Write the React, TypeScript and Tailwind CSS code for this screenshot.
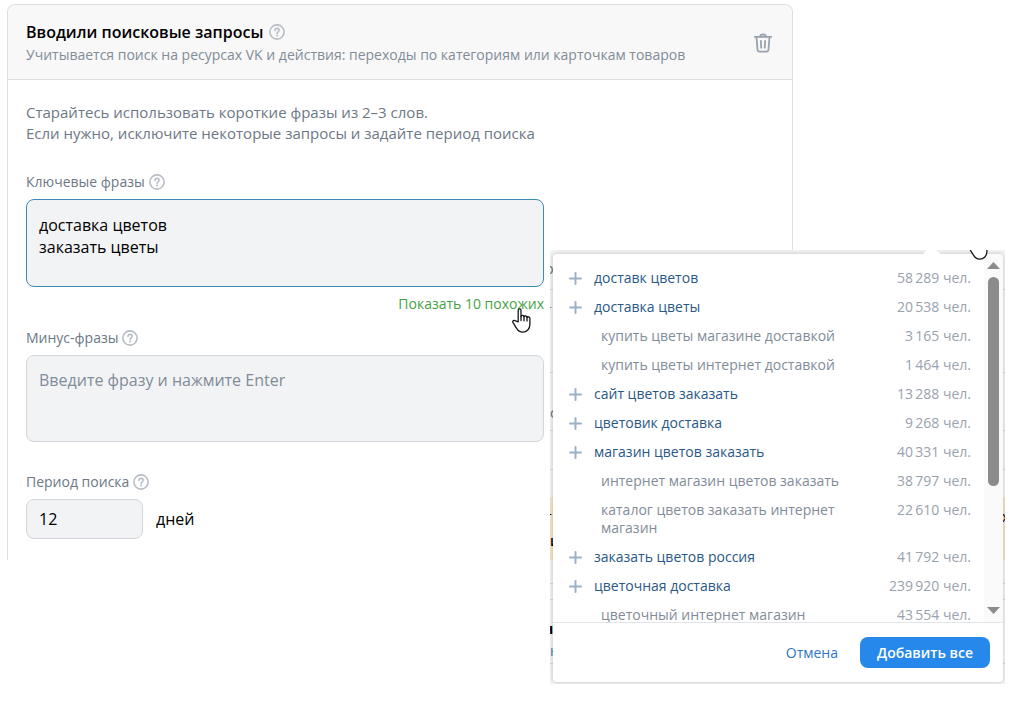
import React from 'react';

interface Phrase {
  text: string;
  count: string;
  nested?: boolean;
}

const phrases: Phrase[] = [
  { text: 'доставк цветов', count: '58\u2009289' },
  { text: 'доставка цветы', count: '20\u2009538' },
  { text: 'купить цветы магазине доставкой', count: '3\u2009165', nested: true },
  { text: 'купить цветы интернет доставкой', count: '1\u2009464', nested: true },
  { text: 'сайт цветов заказать', count: '13\u2009288' },
  { text: 'цветовик доставка', count: '9\u2009268' },
  { text: 'магазин цветов заказать', count: '40\u2009331' },
  { text: 'интернет магазин цветов заказать', count: '38\u2009797', nested: true },
  { text: 'каталог цветов заказать интернет магазин', count: '22\u2009610', nested: true },
  { text: 'заказать цветов россия', count: '41\u2009792' },
  { text: 'цветочная доставка', count: '239\u2009920' },
  { text: 'цветочный интернет магазин', count: '43\u2009554', nested: true },
];

function HelpButton() {
  return (
    <button type="button" aria-label="Подсказка" className="text-[#b8bdc6]">
      <svg width="16" height="16" viewBox="0 0 16 16" fill="none" stroke="currentColor" strokeWidth="1.6">
        <circle cx="8" cy="8" r="7.1" />
        <path d="M6 6.5c0-1.3.9-2.1 2.1-2.1s2 .8 2 1.9c0 1.5-2 1.6-2 3.1" strokeLinecap="round" />
        <circle cx="8.1" cy="11.5" r="1" fill="currentColor" stroke="none" />
      </svg>
    </button>
  );
}

function TrashIcon() {
  return (
    <svg width="20" height="20" viewBox="0 0 20 20" fill="none" stroke="currentColor" strokeWidth="1.8" strokeLinecap="round" strokeLinejoin="round">
      <path d="M1.8 3.9h16.4" />
      <path d="M7.2 3.7C7.2 2.1 8.3 1.3 10 1.3s2.8.8 2.8 2.4" />
      <path d="M3.5 4.2l1 12.3c.1 1.4.9 2.1 2.2 2.1h6.6c1.3 0 2.1-.7 2.2-2.1l1-12.3" />
      <path d="M7.9 8l.3 6.6M12.1 8l-.3 6.6" />
    </svg>
  );
}

function HandCursor() {
  return (
    <svg width="20" height="25" viewBox="0 0 20 25" fill="#fff" stroke="#16161d" strokeWidth="1.3" strokeLinejoin="round" strokeLinecap="round">
      <path d="M6.2 13.8V2.3c0-2 2.8-2 2.8 0v6.2c.2-1.6 2.9-1.5 3 .4.3-1.4 2.9-1.2 3 .6.4-1.2 2.9-.9 2.9 1.1v5.6c0 4.8-3.1 7.9-7.2 7.9-3.3 0-4.9-1.6-6.4-4.2L.9 14.4c-.8-1.6 1.5-2.8 2.6-1.5z" />
      <path d="M9 8.5v4.1M12 8.9v3.9M15 9.5v3.5" fill="none" />
    </svg>
  );
}

function PhraseRow({ text, count, nested }: Phrase) {
  return (
    <li className="flex items-start gap-3 pb-[11px] leading-[18px]">
      {nested ? (
        <span className="w-[186px] grow pl-8 text-[#828c99]">
          <span className="block max-w-[240px]">{text}</span>
        </span>
      ) : (
        <button type="button" className="flex grow items-center gap-3 text-left text-[#2a5885]">
          <svg width="13" height="13" viewBox="0 0 13 13" fill="none" stroke="#9bb0c9" strokeWidth="2" strokeLinecap="round">
            <path d="M6.5 1v11M1 6.5h11" />
          </svg>
          {text}
        </button>
      )}
      <span className="shrink-0 text-[#99a2ad]">{count} чел.</span>
    </li>
  );
}

// Edge of the page that stays visible around the popup
function PageEdge() {
  return (
    <div aria-hidden="true" className="absolute inset-0 overflow-hidden bg-[#f4f4f5] text-sm leading-5">
      <div className="absolute inset-x-0 top-[247px] h-[63px] bg-[#f5e6c8]" />
      <div className="absolute inset-x-0 top-[39px] border-t border-[#d5d7da]" />
      <div className="absolute inset-x-0 top-[122px] border-t border-[#d5d7da]" />
      <div className="absolute inset-x-0 top-[180px] border-t border-[#d5d7da]" />
      <div className="absolute inset-x-0 top-[219px] border-t border-[#d5d7da]" />
      <div className="absolute inset-x-0 top-[333px] border-t border-[#d5d7da]" />
      <div className="absolute inset-x-0 top-[349px] border-t border-[#d5d7da]" />
      <div className="absolute inset-x-0 top-[413px] border-t border-[#d5d7da]" />
      <span className="absolute top-[9px] -left-[5px] text-[#656c75]">р</span>
      <span className="absolute top-[50px] -left-[5px] text-[#828c99]">т</span>
      <span className="absolute top-[153px] left-0 text-[#656c75]">с</span>
      <span className="absolute top-[257px] -left-[5px]">т</span>
      <span className="absolute top-[281px] left-0 font-semibold">и</span>
      <span className="absolute top-[369px] -left-[6px] font-bold">н</span>
      <span className="absolute top-[391px] left-0 text-[#5181b8]">н</span>
      <span className="absolute top-[257px] right-0 w-[3px]">х</span>
    </div>
  );
}

function SimilarPhrases() {
  return (
    <section aria-label="Похожие фразы" className="absolute top-[250px] left-[550px] w-[455px] overflow-hidden pt-1 pr-0.5 pb-0.5 pl-[3px]">
      <PageEdge />
      <div className="relative rounded bg-white shadow-[0_0_5px_rgba(0,0,0,0.22)]">
        <div className="flex h-[368px] overflow-hidden rounded-t">
          <ul className="grow pt-[15px] pr-[13px] pl-4 text-sm">
            {phrases.map((phrase) => (
              <PhraseRow key={phrase.text} {...phrase} />
            ))}
          </ul>
          <div aria-hidden="true" className="flex w-[19px] shrink-0 flex-col items-center bg-[#fafafa] py-2 text-[#8b8b8b]">
            <svg width="13" height="7" viewBox="0 0 13 7" fill="currentColor">
              <path d="M6.5 0L13 7H0z" />
            </svg>
            <div className="mt-2 h-[209px] w-[11px] rounded-full bg-[#8b8b8b]" />
            <svg width="13" height="7" viewBox="0 0 13 7" fill="currentColor" className="mt-auto">
              <path d="M0 0h13L6.5 7z" />
            </svg>
          </div>
        </div>
        <div className="flex items-center justify-end gap-1 border-t border-[#e1e3e6] px-[13px] py-[14px] text-sm">
          <button type="button" className="px-[18px] font-medium text-[#2d75c8]">Отмена</button>
          <button type="button" className="h-[31px] w-[130px] rounded-lg bg-[#2688eb] font-semibold text-white">
            Добавить все
          </button>
        </div>
      </div>
      <svg width="20" height="5" viewBox="0 0 20 5" className="absolute top-0 right-[63px]">
        <path d="M0 5L5 0h9l6 5z" fill="#fff" />
      </svg>
      <div className="absolute top-0 right-4 flex h-[10px] items-end overflow-hidden">
        <HandCursor />
      </div>
    </section>
  );
}

export default function App() {
  return (
    <main className="relative min-h-screen bg-white px-[7px] pt-1 font-['Open_Sans','Noto_Sans',sans-serif] text-black">
      <article className="max-w-[786px] rounded-t-lg border border-b-0 border-[#dcdfe3]">
        <header className="flex items-center justify-between rounded-t-lg border-b border-[#dcdfe3] bg-[#f8f8f8] pt-[15px] pr-[19px] pb-[13px] pl-[18px]">
          <div>
            <div className="flex items-center gap-1.5">
              <h2 className="text-base leading-6 font-semibold">Вводили поисковые запросы</h2>
              <HelpButton />
            </div>
            <p className="text-sm leading-[22px] text-[#818c99]">
              Учитывается поиск на ресурсах VK и действия: переходы по категориям или карточкам товаров
            </p>
          </div>
          <button type="button" aria-label="Удалить" className="text-[#99a2ad]">
            <TrashIcon />
          </button>
        </header>

        <form className="px-[18px] pt-[22px] pb-[21px]">
          <p className="text-[15px] leading-[21px] text-[#6d7885]">
            Старайтесь использовать короткие фразы из 2–3 слов.
            <br />
            Если нужно, исключите некоторые запросы и задайте период поиска
          </p>

          <div className="mt-7 max-w-[518px]">
            <div className="flex h-5 items-center gap-1">
              <label htmlFor="keywords" className="text-sm text-[#6d7885]">Ключевые фразы</label>
              <HelpButton />
            </div>
            <textarea
              id="keywords"
              defaultValue={'доставка цветов\nзаказать цветы'}
              className="mt-[7px] block h-[88px] w-full resize-none rounded-lg border border-[#3f8ab5] bg-[#f2f3f5] px-3 py-[14px] text-base leading-[22px] outline-none"
            />
            <div className="relative mt-[7px] flex justify-end">
              <button type="button" className="text-sm leading-5 text-[#45a345]">Показать 10 похожих</button>
              <div className="absolute top-[14px] right-3">
                <HandCursor />
              </div>
            </div>
          </div>

          <div className="mt-[14px] max-w-[518px]">
            <div className="flex h-5 items-center gap-1">
              <label htmlFor="minus" className="text-sm text-[#6d7885]">Минус-фразы</label>
              <HelpButton />
            </div>
            <textarea
              id="minus"
              placeholder="Введите фразу и нажмите Enter"
              className="mt-[7px] block h-[87px] w-full resize-none rounded-lg border border-[#d3d6da] bg-[#f2f3f5] px-3 py-[13px] text-base leading-[22px] outline-none placeholder:text-[#818c99]"
            />
          </div>

          <div className="mt-[30px]">
            <div className="flex h-5 items-center gap-1">
              <label htmlFor="period" className="text-sm text-[#6d7885]">Период поиска</label>
              <HelpButton />
            </div>
            <div className="mt-[7px] flex items-center gap-[13px] text-base">
              <input
                id="period"
                type="text"
                defaultValue="12"
                className="h-10 w-[117px] rounded-lg border border-[#d3d6da] bg-[#f2f3f5] px-3 outline-none"
              />
              <span>дней</span>
            </div>
          </div>
        </form>
      </article>

      <SimilarPhrases />
    </main>
  );
}
